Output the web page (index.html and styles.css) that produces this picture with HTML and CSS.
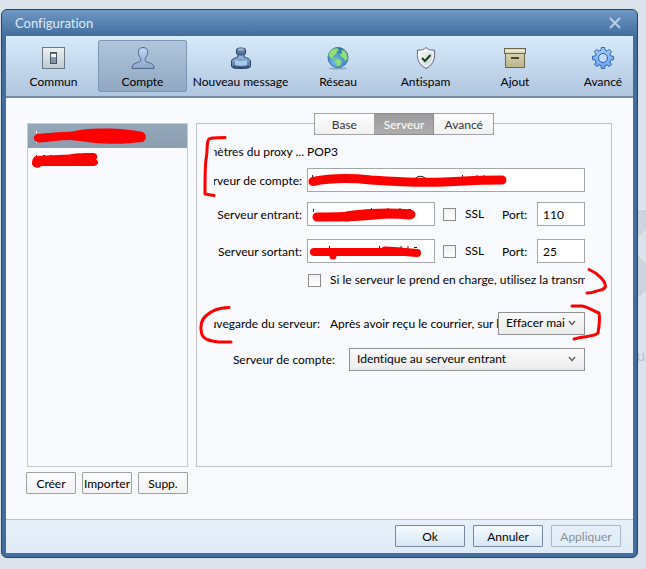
FILE: index.html
```html
<!DOCTYPE html>
<html lang="fr">
<head>
    <meta charset="UTF-8">
    <meta name="viewport" content="width=device-width, initial-scale=1.0">
    <title>Configuration</title>
    <link rel="stylesheet" href="styles.css">
</head>
<body>
    <!-- Desktop behind the dialog -->
    <div class="desktop">
        <svg class="desktop-logo" width="10" height="90" viewBox="0 0 10 90" aria-hidden="true">
            <path d="M0 1H10V19L2 28H0ZM0 44L2 46L10 53V80L2 88H0Z" fill="#cdd3dc"/>
            <path d="M0 1H10" stroke="#c3cad4"/>
        </svg>
        <span class="desktop-text">u</span>
    </div>

    <main class="dialog">
        <header class="titlebar">
            <h1>Configuration</h1>
            <button type="button" class="close" aria-label="Fermer">
                <svg width="12" height="12" viewBox="0 0 12 12"><path d="M1 1L11 11M11 1L1 11" stroke="#b9cfe8" stroke-width="2" fill="none"/></svg>
            </button>
        </header>

        <nav class="toolbar">
            <button type="button" class="tool">
                <svg width="24" height="24" viewBox="0 0 24 24">
                    <defs><linearGradient id="plate" x1="0" y1="0" x2="0" y2="1"><stop offset="0" stop-color="#f0f1f2"/><stop offset="1" stop-color="#b9cbd2"/></linearGradient></defs>
                    <rect x=".5" y="1.5" width="22" height="21" fill="url(#plate)" stroke="#6a7886"/>
                    <rect x="8.5" y="6.5" width="6" height="11" fill="#8496a6" stroke="#44515e"/>
                    <rect x="9" y="8" width="5" height="3" fill="#f4f6f8"/>
                    <path d="M9 7.5H14" stroke="#5f7080"/>
                </svg>
                <span>Commun</span>
            </button>
            <button type="button" class="tool active">
                <svg width="24" height="24" viewBox="0 0 24 24">
                    <defs><linearGradient id="user" x1="0" y1="0" x2="0" y2="1"><stop offset="0" stop-color="#c3d4f4"/><stop offset="1" stop-color="#8ea6c8"/></linearGradient></defs>
                    <path d="M12 1.5C8.8 1.5 7 3.6 7.3 6.6C7.5 9 8.6 10.8 9.7 12.2C10.2 13.4 10 14.8 8.8 15.5C6.5 16.9 2.5 17.2 1.5 19.5L1 22.5H23L22.5 19.5C21.5 17.2 17.5 16.9 15.2 15.5C14 14.8 13.8 13.4 14.3 12.2C15.4 10.8 16.5 9 16.7 6.6C17 3.6 15.2 1.5 12 1.5Z" fill="url(#user)" stroke="#4e678d"/>
                </svg>
                <span>Compte</span>
            </button>
            <button type="button" class="tool">
                <svg width="24" height="24" viewBox="0 0 24 24">
                    <defs><linearGradient id="ink" x1="0" y1="0" x2="0" y2="1"><stop offset="0" stop-color="#9fc4ec"/><stop offset="1" stop-color="#456b97"/></linearGradient></defs>
                    <path d="M9 8V11C5 12 2.5 13.5 2.5 15V20C2.5 22 5 22.5 12 22.5S21.5 22 21.5 20V15C21.5 13.5 19 12 15 11V8Z" fill="url(#ink)" stroke="#2b4467"/>
                    <path d="M7.5 3.5C7.5 1.5 16.5 1.5 16.5 3.5V7.5C16.5 9.5 7.5 9.5 7.5 7.5Z" fill="#5877a3" stroke="#2b4467"/>
                    <ellipse cx="12" cy="3.5" rx="3.5" ry="1.2" fill="#9fb5d0"/>
                    <path d="M6 14Q12 16 18 14V19Q12 20.5 6 19Z" fill="#a8caee"/>
                    <path d="M4 20.5Q12 22.5 20 20.5" stroke="#27405f" fill="none"/>
                </svg>
                <span>Nouveau message</span>
            </button>
            <button type="button" class="tool">
                <svg width="24" height="24" viewBox="0 0 24 24">
                    <defs><radialGradient id="sea" cx=".4" cy=".7" r=".7"><stop offset="0" stop-color="#79c2fa"/><stop offset="1" stop-color="#2b68ba"/></radialGradient></defs>
                    <ellipse cx="12" cy="22.5" rx="9" ry="1" fill="#8fa5c1"/>
                    <circle cx="12" cy="11.5" r="10" fill="url(#sea)" stroke="#376fa9"/>
                    <path d="M3 7C5 3 9 1.8 12 2.5L13 4L10.5 6L11 8L8.5 9L7 11.5L9 12.5L8 14L5 12L2.5 10ZM15 4L18.5 4.5L21 8.5L21.5 13L19 15.5L17.5 12L15 11L14 8.5L16 7ZM9 13L12 12.5L16 15L15 18L12.5 20.5L10.5 20L10 17L8.5 15Z" fill="#8fdf76" stroke="#59b570" stroke-width=".5"/>
                </svg>
                <span>Réseau</span>
            </button>
            <button type="button" class="tool">
                <svg width="24" height="24" viewBox="0 0 24 24">
                    <defs><linearGradient id="shield" x1="0" y1="0" x2="1" y2="1"><stop offset="0" stop-color="#ffffff"/><stop offset="1" stop-color="#c3cdd6"/></linearGradient></defs>
                    <path d="M12 1.5C10.5 3.5 7 4.5 3.5 4C3 12 3.5 18 12 22.5C20.5 18 21 12 20.5 4C17 4.5 13.5 3.5 12 1.5Z" fill="url(#shield)" stroke="#5c6d84"/>
                    <path d="M12 3.5C10.5 5 8 5.7 5 5.5C4.8 12 5.5 17 12 20.8C18.5 17 19.2 12 19 5.5C16 5.7 13.5 5 12 3.5Z" fill="none" stroke="#fff"/>
                    <path d="M8 12L11 15L16.5 9" fill="none" stroke="#17450f" stroke-width="2"/>
                </svg>
                <span>Antispam</span>
            </button>
            <button type="button" class="tool">
                <svg width="24" height="24" viewBox="0 0 24 24">
                    <defs><linearGradient id="box" x1="0" y1="0" x2="0" y2="1"><stop offset="0" stop-color="#d7d3b2"/><stop offset="1" stop-color="#bab48b"/></linearGradient></defs>
                    <rect x="2.5" y="7.5" width="19" height="14" fill="url(#box)" stroke="#6c6749"/>
                    <rect x="1.5" y="2.5" width="21" height="5" fill="#ddd9ba" stroke="#6c6749"/>
                    <path d="M3 4.5H21" stroke="#f2efd8"/>
                    <path d="M8 12H16" stroke="#4c4832" stroke-width="2"/>
                </svg>
                <span>Ajout</span>
            </button>
            <button type="button" class="tool">
                <svg width="24" height="24" viewBox="0 0 24 24">
                    <defs><linearGradient id="gear" x1="0" y1="0" x2="0" y2="1"><stop offset="0" stop-color="#a2ccfb"/><stop offset="1" stop-color="#66a3f2"/></linearGradient></defs>
                    <path d="M10 4.2L10.4 1.5H13.6L14 4.2L16.1 5.1L18.3 3.4L20.6 5.7L18.9 7.9L19.8 10L22.5 10.4V13.6L19.8 14L18.9 16.1L20.6 18.3L18.3 20.6L16.1 18.9L14 19.8L13.6 22.5H10.4L10 19.8L7.9 18.9L5.7 20.6L3.4 18.3L5.1 16.1L4.2 14L1.5 13.6V10.4L4.2 10L5.1 7.9L3.4 5.7L5.7 3.4L7.9 5.1Z" fill="url(#gear)" stroke="#2d62a8" stroke-linejoin="round"/>
                    <circle cx="12" cy="12" r="4.5" fill="#c3d8ef" stroke="#2d62a8"/>
                </svg>
                <span>Avancé</span>
            </button>
        </nav>

        <div class="content">
            <section class="accounts">
                <ul class="account-list">
                    <li class="selected"></li>
                    <li></li>
                </ul>
                <div class="account-actions">
                    <button type="button">Créer</button>
                    <button type="button">Importer</button>
                    <button type="button">Supp.</button>
                </div>
            </section>

            <section class="panel">
                <div class="tabs">
                    <button type="button">Base</button>
                    <button type="button" class="current">Serveur</button>
                    <button type="button">Avancé</button>
                </div>

                <form class="server-form">
                    <div class="row row-proxy">
                        <span class="label"><span>mètres du proxy ...</span></span>
                        <span>POP3</span>
                    </div>
                    <div class="row row-account">
                        <label class="label" for="account"><span>rveur de compte:</span></label>
                        <input type="text" id="account" class="grow">
                    </div>
                    <div class="row row-in">
                        <label class="label" for="incoming"><span>Serveur entrant:</span></label>
                        <input type="text" id="incoming" class="grow">
                        <label class="ssl"><input type="checkbox">SSL</label>
                        <label class="port-label" for="port-in">Port:</label>
                        <input type="text" id="port-in" class="port" value="110">
                    </div>
                    <div class="row row-out">
                        <label class="label" for="outgoing"><span>Serveur sortant:</span></label>
                        <input type="text" id="outgoing" class="grow">
                        <label class="ssl"><input type="checkbox">SSL</label>
                        <label class="port-label" for="port-out">Port:</label>
                        <input type="text" id="port-out" class="port" value="25">
                    </div>
                    <div class="row row-secure">
                        <label class="secure"><input type="checkbox"><span>Si le serveur le prend en charge, utilisez la transm</span></label>
                    </div>
                    <div class="row row-backup">
                        <label class="label label-wide" for="backup"><span>uvegarde du serveur:</span></label>
                        <span class="backup-text">Après avoir reçu le courrier, sur l</span>
                        <select id="backup" class="backup-select">
                            <option>Effacer mai</option>
                        </select>
                    </div>
                    <div class="row row-smtp">
                        <label class="label label-smtp" for="smtp"><span>Serveur de compte:</span></label>
                        <select id="smtp" class="grow">
                            <option>Identique au serveur entrant</option>
                        </select>
                    </div>
                </form>
            </section>
        </div>

        <footer class="footer">
            <button type="button">Ok</button>
            <button type="button">Annuler</button>
            <button type="button" disabled>Appliquer</button>
        </footer>
    </main>

    <!-- Hand-drawn marks: private values are struck out, cut labels are bracketed -->
    <svg class="marks" width="646" height="569" viewBox="0 0 646 569" aria-hidden="true">
        <g stroke="#fff" fill="none">
            <path d="M36.5 131V133M36.5 141V143"/>
        </g>
        <g stroke="#222" fill="none">
            <path d="M36.5 155V158M43 155.5H45M50 155.5H52M312.5 175V178M366 183.5H380M397 177.5H399M415 178.5Q420 174 426 178.5M462.5 175V178M477 175V178M484 175V178M497 176.5H500M313.5 209V212M371.5 208V211M388 208V211M400 208V211M408 209.5H411M329.5 246V249M379.5 246V249M401 246V249M408 246V249M414 247.5H417"/>
        </g>
        <g fill="#f00">
            <path d="M37 134C46 133 63 132 72 131.5C82 129 94 128 106 128.5C120 128.5 131 130 143 132C147 135 147 139 143 142C132 143 117 144.5 104 143.5C92 143 82 141 71 140C60 140 49 142 39 142.5C33 142 32 136 37 134Z"/>
            <path d="M36 156L70 154.5C74 153 88 153 94 153C98 154 98 158 96 159.5C99 161 99 165 94 166H41C39 169 33 168 32 164C32 160 33 157 36 156Z"/>
        </g>
        <g stroke="#f00" fill="none" stroke-linecap="round" stroke-linejoin="round">
            <path d="M313 181.5C330 178 352 178 371 180C400 182 420 183 444 182C465 181 480 180 502 180" stroke-width="9"/>
            <path d="M317 217C340 217 360 217 380 214.5C390 213 400 213 411 214.5" stroke-width="9"/>
            <path d="M347 216.5C365 213 395 213 409 214.5" stroke-width="10"/>
            <path d="M314 252H405L417 253" stroke-width="8"/>
            <path d="M385 250L402 251M333 253V256" stroke-width="7"/>
            <path d="M225 137.5C218 138 213 137 209 139C206 142 208 151 206 159C205 167 205 178 205 194L214 195.5" stroke-width="3"/>
            <path d="M589 269.5C597 273 605 280 605.5 286C605 290 600 290 595 291.5C592 293 590 293 587 293" stroke-width="3"/>
            <path d="M229 307.5C217 308 212 311 207 315C201 319 200 327 201.5 333C203 340 211 341 219 342H231" stroke-width="3"/>
            <path d="M572 306H582C588 307 592 310 599 313C600 318 599 327 598 333C594 337 584 336 574 339" stroke-width="3"/>
        </g>
    </svg>
</body>
</html>
```
FILE: styles.css
```css
:root {
    --frame: #426e9e;
    --page: #f9fafe;
    --line: #a5a8ab;
}

* {
    box-sizing: border-box;
}

body {
    display: flex;
    min-height: 100vh;
    margin: 0;
    padding: 9px 8px 11px 1px;
    background: #dbe2e9;
    font-family: Lato, "Segoe UI", sans-serif;
    font-size: 12px;
    font-variant-ligatures: none;
    line-height: 16px;
    color: #000;
}

button, input, select {
    font: inherit;
    color: inherit;
}

/* Desktop */
.desktop {
    position: absolute;
    top: 210px;
    right: 0;
    width: 10px;
    height: 160px;
    overflow: hidden;
}

.desktop-logo {
    display: block;
}

.desktop-text {
    position: absolute;
    right: 1px;
    top: 137px;
    font-size: 15px;
    color: #b9c3cf;
}

/* Dialog */
.dialog {
    position: relative;
    flex: 1;
    min-width: 0;
    display: flex;
    flex-direction: column;
    padding: 0 4px 4px;
    border: 1px solid #29425e;
    border-radius: 6px;
    background: var(--frame);
}

.titlebar {
    display: flex;
    align-items: center;
    justify-content: space-between;
    height: 26px;
    margin: 0 -4px;
    padding: 0 16px 0 13px;
    border-radius: 5px 5px 0 0;
    background: linear-gradient(#6e97c4, #426e9e);
}

.titlebar h1 {
    margin: 0;
    font-size: 13px;
    font-weight: normal;
    color: #dfeaf6;
}

.close {
    display: flex;
    padding: 0;
    border: none;
    background: none;
}

.toolbar {
    display: grid;
    grid-template-columns: 89fr 89fr 107fr 88fr 87fr 92fr 72fr;
    height: 62px;
    padding: 4px 0 4px 3px;
    border-bottom: 2px solid #728aa5;
    background: linear-gradient(#d8ebfa, #b0c5df);
}

.tool {
    display: flex;
    flex-direction: column;
    align-items: center;
    gap: 4px;
    padding: 5px 0 0;
    border: 1px solid transparent;
    border-radius: 2px;
    background: none;
    white-space: nowrap;
}

.tool:last-child {
    padding-left: 12px;
}

.tool.active {
    border-color: #7d96b2;
    background: linear-gradient(#b0c6dd, #91a8c1);
}

.content {
    flex: 1;
    display: flex;
    gap: 8px;
    padding: 25px 21px 25px 20px;
    background: var(--page);
}

/* Accounts */
.accounts {
    display: flex;
    flex-direction: column;
    gap: 5px;
    width: 162px;
}

.account-list {
    flex: 1;
    margin: 0 0 0 1px;
    padding: 0;
    border: 1px solid #c8cacc;
    list-style: none;
}

.account-list li {
    height: 24px;
}

.account-list .selected {
    background: linear-gradient(#95a8bb, #8b9dae);
}

.account-actions {
    display: flex;
    gap: 6px;
}

.account-actions button {
    flex: 1 1 0;
    min-width: 0;
    height: 22px;
    padding: 2px 0 0;
    border: 1px solid #a0a2a3;
    border-radius: 1px;
    background: linear-gradient(#fdfdfd, #f1f1f1);
}

/* Server panel */
.panel {
    flex: 1;
    min-width: 0;
    margin-bottom: 27px;
    border: 1px solid #c3c4c7;
}

.tabs {
    display: flex;
    width: 180px;
    margin: -11px auto 0;
}

.tabs button {
    flex: 1;
    height: 22px;
    padding: 2px 0 0;
    border: 1px solid #a0a2a3;
    background: linear-gradient(#fdfdfd, #f1f1f1);
    color: #333;
}

.tabs button + button {
    border-left: none;
}

.tabs .current {
    border-color: #8c8c8c;
    background: linear-gradient(#9c9c9c, #adadad);
    color: #fff;
}

.server-form {
    padding: 5px 26px 0 17px;
}

.row {
    display: flex;
    align-items: center;
    height: 24px;
    white-space: nowrap;
}

.row-account {
    margin-top: 4px;
}

.row-in {
    margin-top: 10px;
}

.row-out {
    margin-top: 13px;
}

.row-secure {
    margin-top: 5px;
}

.row-backup {
    margin-top: 19px;
}

.row-smtp {
    margin-top: 12px;
}

.label {
    display: flex;
    justify-content: flex-end;
    flex: none;
    width: 88px;
    margin-right: 5px;
    padding-top: 2px;
    overflow: hidden;
}

.row-proxy .label {
    width: 90px;
    margin-right: 3px;
    padding-top: 0;
}

.label-wide {
    width: 106px;
    margin-right: 10px;
}

.label-smtp {
    width: 121px;
    margin-right: 14px;
}

.grow {
    flex: 1;
    min-width: 0;
}

input[type="text"] {
    height: 24px;
    padding: 0 5px;
    border: 1px solid var(--line);
    background: #fff;
}

input[type="checkbox"] {
    flex: none;
    width: 13px;
    height: 13px;
    margin: 0 9px 0 0;
    appearance: none;
    border: 1px solid #8b8b8b;
    background: linear-gradient(#f1f1f1, #fff);
}

.ssl {
    display: flex;
    align-items: center;
    width: 59px;
    margin-left: 8px;
}

.port-label {
    width: 35px;
    padding-top: 2px;
}

.port {
    width: 48px;
}

.secure {
    display: flex;
    align-items: center;
    min-width: 0;
    margin-left: 94px;
}

.secure span, .backup-text {
    overflow: hidden;
}

.backup-text {
    flex: 1;
    min-width: 0;
    padding-top: 2px;
}

select {
    height: 23px;
    padding: 0 18px 0 7px;
    appearance: none;
    border: 1px solid #8f9193;
    border-radius: 0;
    background: url("data:image/svg+xml,%3Csvg xmlns='http://www.w3.org/2000/svg' width='8' height='6'%3E%3Cpath d='M1 1L4 4.5L7 1' fill='none' stroke='%23666' stroke-width='1.5'/%3E%3C/svg%3E") no-repeat right 8px center, linear-gradient(#fafafa, #ececec);
}

.backup-select {
    width: 87px;
}

/* Footer */
.footer {
    display: flex;
    justify-content: flex-end;
    gap: 8px;
    height: 34px;
    padding: 5px 12px;
    border-top: 1px solid #b8c4d1;
    background: linear-gradient(#e6f0fa, #deebf6);
}

.footer button {
    width: 70px;
    height: 22px;
    padding: 2px 0 0;
    border: 1px solid #78899b;
    border-radius: 1px;
    background: linear-gradient(#f5faff, #d7e7f5);
}

.footer button:disabled {
    border-color: #a9b8c7;
    background: none;
    color: #8a8f94;
}

/* Marks */
.marks {
    position: absolute;
    top: 0;
    left: 0;
    pointer-events: none;
}
```
